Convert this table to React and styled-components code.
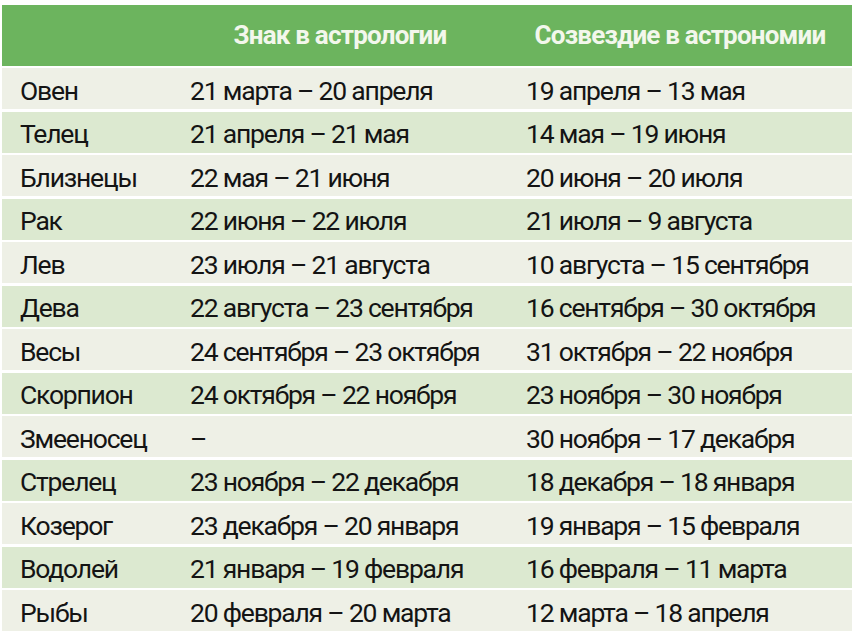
import React from "react";
import styled, { createGlobalStyle } from "styled-components";

const GlobalStyle = createGlobalStyle`
  html, body {
    margin: 0;
    padding: 0;
    background: #fff;
  }
  body {
    font-family: Roboto, "Liberation Sans", sans-serif;
  }
`;

const rows = [
  ["Овен", "21 марта – 20 апреля", "19 апреля – 13 мая"],
  ["Телец", "21 апреля – 21 мая", "14 мая – 19 июня"],
  ["Близнецы", "22 мая – 21 июня", "20 июня – 20 июля"],
  ["Рак", "22 июня – 22 июля", "21 июля – 9 августа"],
  ["Лев", "23 июля – 21 августа", "10 августа – 15 сентября"],
  ["Дева", "22 августа – 23 сентября", "16 сентября – 30 октября"],
  ["Весы", "24 сентября – 23 октября", "31 октября – 22 ноября"],
  ["Скорпион", "24 октября – 22 ноября", "23 ноября – 30 ноября"],
  ["Змееносец", "–", "30 ноября – 17 декабря"],
  ["Стрелец", "23 ноября – 22 декабря", "18 декабря – 18 января"],
  ["Козерог", "23 декабря – 20 января", "19 января – 15 февраля"],
  ["Водолей", "21 января – 19 февраля", "16 февраля – 11 марта"],
  ["Рыбы", "20 февраля – 20 марта", "12 марта – 18 апреля"],
];

const Wrap = styled.div`
  box-sizing: border-box;
  padding: 5px 3px 0 2px;
  width: 855px;
`;

const Table = styled.div`
  display: grid;
  row-gap: 2.5px;
`;

const Row = styled.div`
  display: grid;
  grid-template-columns: 170px 336px 1fr;
  align-items: center;
  height: ${(p) => (p.$head ? "60.5px" : "41px")};
  background: ${(p) => (p.$head ? "#6cb45e" : p.$alt ? "#dce9d0" : "#eef0e6")};
`;

const Cell = styled.div`
  padding: 3px 0 0 18px;
  font-size: 26.5px;
  letter-spacing: -1.2px;
  color: #141414;
  white-space: nowrap;
`;

const HeadCell = styled.div`
  text-align: center;
  font-size: 26px;
  font-weight: 700;
  letter-spacing: -0.8px;
  color: #f3f7ec;
  white-space: nowrap;
`;

export default function App() {
  return (
    <Wrap>
      <GlobalStyle />
      <Table>
        <Row $head>
          <HeadCell />
          <HeadCell>Знак в астрологии</HeadCell>
          <HeadCell>Созвездие в астрономии</HeadCell>
        </Row>
        {rows.map((r, i) => (
          <Row key={r[0]} $alt={i % 2 === 1}>
            <Cell>{r[0]}</Cell>
            <Cell>{r[1]}</Cell>
            <Cell>{r[2]}</Cell>
          </Row>
        ))}
      </Table>
    </Wrap>
  );
}
